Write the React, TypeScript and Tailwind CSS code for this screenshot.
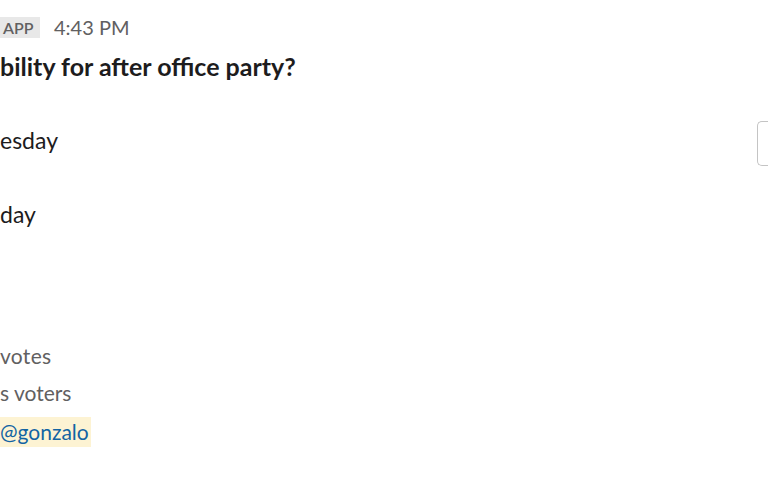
export default function App() {
  return (
    <div
      className="w-[768px] h-[480px] bg-white overflow-hidden relative text-[#1d1c1d]"
      style={{ fontFamily: "Lato, 'Noto Sans', sans-serif" }}
    >
      <div className="flex items-center gap-[14px] pt-[17px]">
        <span className="bg-[#e8e8e8] text-[#616061] text-[16px] font-semibold leading-[21px] h-[21px] pl-[3px] w-[40px] overflow-hidden">
          APP
        </span>
        <span className="text-[20px] text-[#616061] leading-[21px]">4:43 PM</span>
      </div>
      <div className="mt-[13px] text-[25px] font-bold leading-[30px]">
        bility for after office party?
      </div>
      <div className="flex items-start justify-between mt-[40px]">
        <div className="text-[23px] leading-[30px] mt-[4px]">esday</div>
        <div className="w-[11px] h-[45px] border border-[#c4c4c4] rounded-[5px] border-r-0 rounded-r-none"></div>
      </div>
      <div className="mt-[33px] text-[23px] leading-[30px]">day</div>
      <div className="mt-[115px] flex flex-col text-[21px] text-[#616061] leading-[24px]">
        <div className="tracking-[0.3px]">votes</div>
        <div className="mt-[13px]">s voters</div>
        <div className="mt-[12px]">
          <span className="bg-[#fdf3d3] text-[#1264a3] h-[30px] pr-[2px] inline-block leading-[30px]">
            @gonzalo
          </span>
        </div>
      </div>
    </div>
  );
}
